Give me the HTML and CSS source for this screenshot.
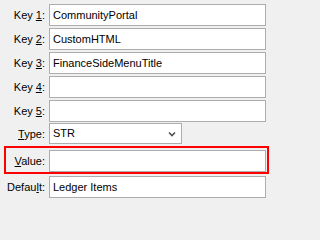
FILE: index.html
```html
<!DOCTYPE html>
<html>
<head>
<meta charset="utf-8">
<link rel="stylesheet" href="styles.css">
</head>
<body>
<div class="form">
  <div class="row"><label class="lbl">Key <u>1</u>:</label><div class="field">CommunityPortal</div></div>
  <div class="row"><label class="lbl">Key <u>2</u>:</label><div class="field">CustomHTML</div></div>
  <div class="row"><label class="lbl">Key <u>3</u>:</label><div class="field">FinanceSideMenuTitle</div></div>
  <div class="row"><label class="lbl">Key <u>4</u>:</label><div class="field"></div></div>
  <div class="row"><label class="lbl">Key <u>5</u>:</label><div class="field"></div></div>
  <div class="row row-type"><label class="lbl"><u>T</u>ype:</label>
    <div class="select">STR
      <svg class="chev" width="8" height="6" viewBox="0 0 8 6"><path d="M1 1.5 L4 4.5 L7 1.5" fill="none" stroke="#505050" stroke-width="1.6"/></svg>
    </div>
  </div>
  <div class="row row-hl"><label class="lbl"><u>V</u>alue:</label><div class="field"></div></div>
  <div class="row"><label class="lbl">Defau<u>l</u>t:</label><div class="field">Ledger Items</div></div>
</div>
</body>
</html>
```
FILE: styles.css
```css
html, body {
  margin: 0;
  padding: 0;
  background: #f0f0f0;
}
body {
  width: 271px;
  height: 202px;
  overflow: hidden;
  font-family: "Liberation Sans", Arial, sans-serif;
  font-size: 11px;
  color: #000;
}
.form {
  display: flex;
  flex-direction: column;
  gap: 2px;
  padding-top: 4px;
}
.row {
  display: grid;
  grid-template-columns: 45px 217px;
  column-gap: 4px;
  align-items: center;
  height: 22px;
}
.lbl {
  text-align: right;
  white-space: nowrap;
}
.lbl u {
  text-decoration-thickness: 1px;
  text-underline-offset: 1px;
}
.field {
  box-sizing: border-box;
  height: 22px;
  border: 1px solid #adadad;
  background: #fff;
  padding-left: 3px;
  line-height: 20px;
  white-space: nowrap;
  overflow: hidden;
}
.row-type {
  margin-top: -1px;
  height: 21px;
}
.select {
  box-sizing: border-box;
  width: 133px;
  height: 21px;
  border: 1px solid #adadad;
  background: #fff;
  padding-left: 3px;
  line-height: 19px;
  display: flex;
  align-items: center;
  justify-content: space-between;
  padding-right: 5px;
}
.chev {
  display: block;
}
.row-hl {
  box-sizing: border-box;
  height: 28px;
  width: 265px;
  margin-left: 4px;
  border: 2px solid #ff0000;
  padding: 2px 1px 0 0;
  grid-template-columns: 39px 217px;
  align-items: start;
}
.row-hl .lbl {
  line-height: 22px;
}
```
